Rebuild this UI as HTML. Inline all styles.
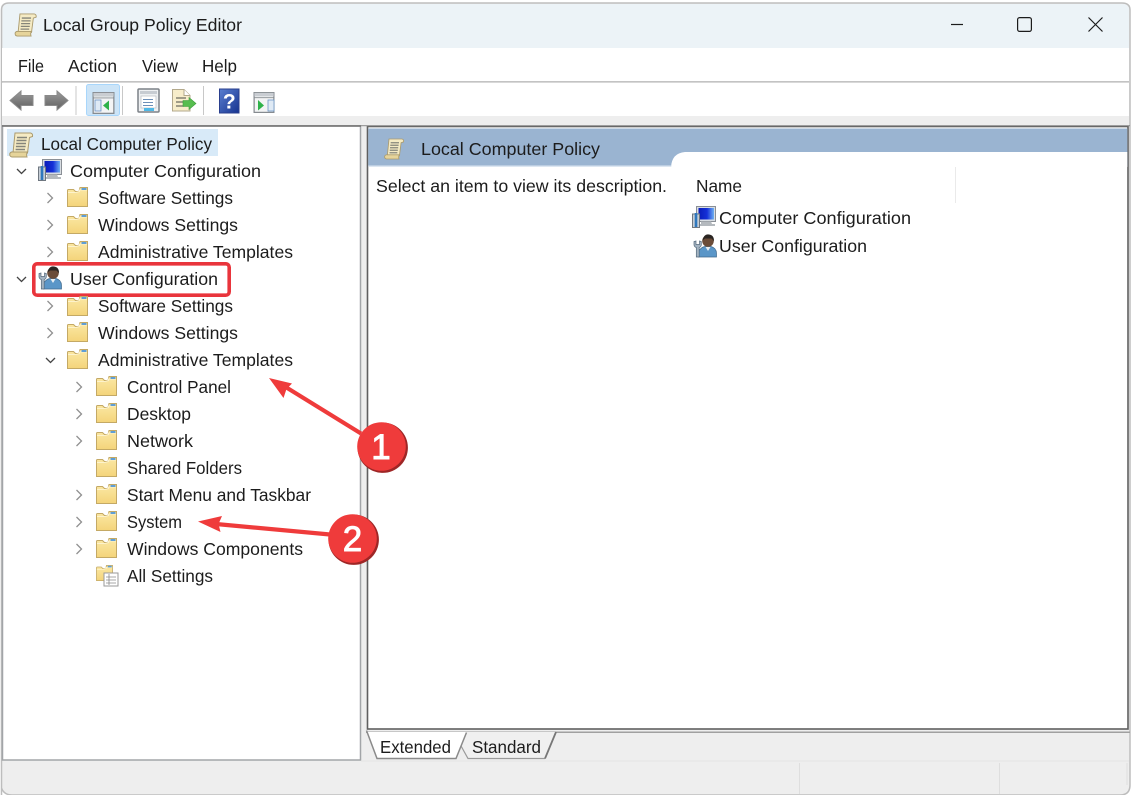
<!DOCTYPE html>
<html lang="en"><head><meta charset="utf-8"><title>Local Group Policy Editor</title>
<style>
html,body{margin:0;padding:0;background:#fff;width:1131px;height:795px;overflow:hidden}
svg{display:block}
text{font-family:"Liberation Sans",sans-serif;font-size:17.5px;fill:#1c1c1c}
</style></head><body>
<svg width="1131" height="795" viewBox="0 0 1131 795" xmlns="http://www.w3.org/2000/svg">
<defs>
<linearGradient id="fg" x1="0" y1="0" x2="0" y2="1"><stop offset="0" stop-color="#fbe9a6"/><stop offset="1" stop-color="#f4d47a"/></linearGradient>
<linearGradient id="ag" x1="0" y1="0" x2="0" y2="1"><stop offset="0" stop-color="#9c9c9c"/><stop offset="1" stop-color="#5f5f5f"/></linearGradient>
<linearGradient id="hg" x1="0" y1="0" x2="1" y2="1"><stop offset="0" stop-color="#5a7fd0"/><stop offset="1" stop-color="#16338f"/></linearGradient>
<linearGradient id="sg" x1="0" y1="0" x2="1" y2="0"><stop offset="0" stop-color="#0a1cb8"/><stop offset=".55" stop-color="#1530d8"/><stop offset="1" stop-color="#6fb0f2"/></linearGradient>
<symbol id="folder" viewBox="0 0 21 20" width="21" height="20" overflow="visible">
<path d="M.5 19.500V3.500Q.5 2.500 1.500 2.500H6.500L8.500 4.500H12L13 .5H20.500V19.500Z" fill="url(#fg)" stroke="#c4a965"/>
<path d="M1 5.500H9L12.500 4.500V3H20" fill="none" stroke="#fdf3cc"/>
<rect x="14.500" y="1" width="5" height="2" fill="#5f9ed6"/>
</symbol>
<symbol id="scroll" viewBox="0 0 24 26" width="24" height="26" overflow="visible">
<path d="M6 1H21.500Q24 1.500 23.500 4.500L20.500 5.500L18.500 21H4Z" fill="#f5ebc4" stroke="#ab9b6e"/>
<path d="M.8 21.500Q2 19.500 4 20H18.500Q17 22 18 25H3Q.3 24.500 .8 21.500Z" fill="#e6d49a" stroke="#ab9b6e"/>
<path d="M8 5.500H18M7.500 8.500H17.500M7.200 11.500H17M6.900 14.500H16.600M6.600 17.500H16" stroke="#85857a" stroke-width="1.400"/>
</symbol>
<symbol id="comp" viewBox="0 0 24 22" width="24" height="22" overflow="visible">
<rect x="4.500" y=".5" width="19" height="15" fill="#d8dde2" stroke="#8a8f96"/>
<rect x="6.500" y="2" width="15.500" height="11.500" fill="url(#sg)"/>
<path d="M9 15.500h10l1 2.500h3v2H7v-2h2z" fill="#b4b9be"/>
<rect x=".5" y="8" width="7" height="13.500" fill="#c6cdd5" stroke="#6f7780"/>
<rect x="2.700" y="7" width="2.600" height="14" fill="#2f78bd"/>
</symbol>
<symbol id="user" viewBox="0 0 24 24" width="24" height="24" overflow="visible">
<path d="M5.500 23V17.500Q8 13 12 12.500H18Q23.500 14 23.500 19.500V23Z" fill="#5a96c8" stroke="#40698c" stroke-width=".7"/>
<path d="M12.500 13l2.500 4 2.500-4z" fill="#e8eef3"/>
<circle cx="15" cy="7" r="5.800" fill="#6b4c38"/>
<path d="M9.500 6.500Q11 -.5 16 .5Q21 1 21 7L18.500 4.500H12Z" fill="#2a2522"/>
<path d="M1 7.500V11Q1.500 13 3.300 13.500V23H6.200V13.500Q8 13 8.300 11V7.500L6.500 7V10.500H3V7Z" fill="#a3b3c1" stroke="#566a7c" stroke-width=".7"/>
</symbol>
<symbol id="pane" viewBox="0 0 24 24" width="24" height="24" overflow="visible">
<rect x=".7" y=".7" width="22.600" height="22.600" fill="#f3f4f5" stroke="#868b90" stroke-width="1.400"/>
<rect x="1" y="1" width="22" height="4" fill="#c9cdd2"/>
<path d="M1 6.500H23" stroke="#868b90"/>
</symbol>
</defs>

<!-- window -->
<rect x="0" y="0" width="1131" height="795" fill="#fff"/>
<path d="M1.500 795V10Q1.500 3 9 3H1122Q1130 3 1130 10V785Q1130 795 1120 795H12Q4 795 1.500 788" fill="#eee" stroke="#bdbdbd" stroke-width="1.500"/>
<path d="M2.500 48V10Q2.500 4 9 4H1122Q1129 4 1129 10V48Z" fill="#ecf3f7"/>
<rect x="2" y="48" width="1127" height="33" fill="#fff"/>
<rect x="2" y="81" width="1127" height="1.500" fill="#c3c3c3"/>
<rect x="2" y="83" width="1127" height="33" fill="#fff"/>
<rect x="2" y="116" width="1127" height="9" fill="#eee"/>

<!-- title -->
<use href="#scroll" x="14" y="13" width="23" height="24"/>
<text x="43" y="31" textLength="199" lengthAdjust="spacingAndGlyphs">Local Group Policy Editor</text>
<path d="M951 24.500H963" stroke="#1c1c1c" stroke-width="1.200"/>
<rect x="1017.600" y="17.600" width="13.800" height="13.800" rx="2" fill="none" stroke="#1c1c1c" stroke-width="1.200"/>
<path d="M1088.500 17.500L1102.500 31.500M1102.500 17.500L1088.500 31.500" stroke="#1c1c1c" stroke-width="1.200"/>

<!-- menu -->
<text x="18" y="72" textLength="26" lengthAdjust="spacingAndGlyphs">File</text>
<text x="68" y="72" textLength="49" lengthAdjust="spacingAndGlyphs">Action</text>
<text x="142" y="72" textLength="36" lengthAdjust="spacingAndGlyphs">View</text>
<text x="202" y="72" textLength="35" lengthAdjust="spacingAndGlyphs">Help</text>

<!-- toolbar -->
<path d="M10 100.500L21 91V95.500H33V105.500H21V110Z" fill="url(#ag)" stroke="#8a8a8a"/>
<path d="M68 100.500L57 91V95.500H45V105.500H57V110Z" fill="url(#ag)" stroke="#8a8a8a"/>
<path d="M76 86V115M122.500 86V115M203.500 86V115" stroke="#c8c8c8" stroke-width="1"/>
<rect x="86.500" y="84.500" width="33" height="31" rx="2" fill="#cce4f7" stroke="#a8d6fb"/>
<use href="#pane" x="92" y="92" width="23" height="22"/>
<rect x="95" y="100" width="6" height="11" fill="#dfeaf5" stroke="#6d96c5" stroke-width=".8"/>
<path d="M109 100.500V110.500L103 105.500Z" fill="#2fb24a"/>
<!-- properties -->
<rect x="138" y="89" width="21" height="23" rx="1" fill="#eef0f2" stroke="#7c8187" stroke-width="1.500"/>
<rect x="140" y="91" width="17" height="3" fill="#c7ccd2"/>
<rect x="141" y="96" width="15" height="12" fill="#fff" stroke="#b9bdc2" stroke-width=".7"/>
<path d="M143 99.500H153M143 102.500H153M143 105.500H153" stroke="#6d8fb8"/>
<rect x="144" y="108" width="10" height="3" fill="#4fb8e6"/>
<!-- export -->
<path d="M172.500 89.500H184L190 95.500V111H172.500Z" fill="#f7edca" stroke="#b3a98c"/>
<path d="M184 89.500V95.500H190" fill="#fff" stroke="#b3a98c"/>
<path d="M176 98H186M176 102H184M176 106H184" stroke="#6c6c60" stroke-width="1.300"/>
<path d="M196 103.500L189 97.500V100.500H183V106.500H189V109.500Z" fill="#57bd4f" stroke="#3d9c3d" stroke-width=".6"/>
<!-- help -->
<rect x="219.500" y="89" width="19.500" height="24" fill="url(#hg)" stroke="#2a3f8e"/>
<text x="229.300" y="108.500" text-anchor="middle" style="font-size:21px;font-weight:bold;fill:#fff">?</text>
<!-- panel -->
<use href="#pane" x="252" y="92" width="24" height="21"/>
<rect x="268" y="100" width="6" height="11" fill="#dfeaf5" stroke="#6d96c5" stroke-width=".8"/>
<path d="M258 100V110.500L264 105.500Z" fill="#2fb24a"/>

<!-- left pane -->
<rect x="2.500" y="126" width="358" height="634" fill="#fff" stroke="#a2a5a8" stroke-width="1.500"/>
<rect x="2" y="125.200" width="359" height="1.500" fill="#6e6e6e"/>
<rect x="7" y="129" width="211" height="27" fill="#d8eaf8"/>

<!-- right pane -->
<rect x="367.500" y="126.500" width="760.500" height="602.500" fill="#fff" stroke="#5f5f5f" stroke-width="1.600"/>
<rect x="361" y="125.200" width="769" height="1" fill="#8a8a8a"/>
<rect x="368.300" y="128.500" width="759" height="37.500" fill="#9ab4d1"/>
<path d="M671 167Q672 153 685 152H1127.300V167Z" fill="#fff"/>
<rect x="368.300" y="165.500" width="303" height="1.500" fill="#dce6f1"/>
<rect x="955" y="167" width="1" height="36" fill="#eaeaea"/>
<use href="#scroll" x="384" y="137" width="20" height="24"/>
<text x="421" y="155" textLength="179" lengthAdjust="spacingAndGlyphs">Local Computer Policy</text>
<text x="376" y="192" textLength="291" lengthAdjust="spacingAndGlyphs">Select an item to view its description.</text>
<text x="696" y="192" textLength="46" lengthAdjust="spacingAndGlyphs">Name</text>
<use href="#comp" x="692" y="206"/>
<text x="719" y="224" textLength="192" lengthAdjust="spacingAndGlyphs">Computer Configuration</text>
<use href="#user" x="693" y="234"/>
<text x="719" y="252" textLength="148" lengthAdjust="spacingAndGlyphs">User Configuration</text>

<!-- tabs -->
<rect x="366" y="731.500" width="764" height="1.500" fill="#a0a0a0"/>
<path d="M466 732L460 745L468 758.500H545L556 732Z" fill="#f0f0f0"/>
<path d="M466 733L460.500 745L468 758.500H545" fill="none" stroke="#9a9a9a" stroke-width="1.200"/>
<path d="M545 758.500L556 732" fill="none" stroke="#777" stroke-width="1.800"/>
<path d="M366 730L377 758.500H456L467 732H366Z" fill="#fff"/>
<path d="M366.500 730.500L377 758.500H456L466.500 732.500" fill="none" stroke="#8a8a8a" stroke-width="1.500"/>
<text x="380" y="753" textLength="71" lengthAdjust="spacingAndGlyphs">Extended</text>
<text x="472" y="753" textLength="69" lengthAdjust="spacingAndGlyphs">Standard</text>

<!-- status -->
<rect x="361" y="760.500" width="768" height="1" fill="#e4e4e4"/>
<path d="M799.500 763V794M999.500 763V794M1127 763V785" stroke="#dedede" stroke-width="1"/>

<!-- tree chevrons -->
<g fill="none" stroke="#444" stroke-width="1.300">
<path d="M17 169L21.500 173.500L26 169M17 277L21.500 281.500L26 277M46 358L50.500 362.500L55 358"/>
</g>
<g fill="none" stroke="#909090" stroke-width="1.300">
<path d="M47.500 193L52.500 198L47.500 203M47.500 220L52.500 225L47.500 230M47.500 247L52.500 252L47.500 257M47.500 301L52.500 306L47.500 311M47.500 328L52.500 333L47.500 338"/>
<path d="M76.500 382L81.500 387L76.500 392M76.500 409L81.500 414L76.500 419M76.500 436L81.500 441L76.500 446M76.500 490L81.500 495L76.500 500M76.500 517L81.500 522L76.500 527M76.500 544L81.500 549L76.500 554"/>
</g>

<!-- tree -->
<use href="#scroll" x="9" y="132"/>
<text x="41" y="150" textLength="171" lengthAdjust="spacingAndGlyphs">Local Computer Policy</text>
<use href="#comp" x="38" y="159"/>
<text x="70" y="177" textLength="191" lengthAdjust="spacingAndGlyphs">Computer Configuration</text>
<use href="#folder" x="67" y="187"/><text x="98" y="204" textLength="135" lengthAdjust="spacingAndGlyphs">Software Settings</text>
<use href="#folder" x="67" y="214"/><text x="98" y="231" textLength="140" lengthAdjust="spacingAndGlyphs">Windows Settings</text>
<use href="#folder" x="67" y="241"/><text x="98" y="258" textLength="195" lengthAdjust="spacingAndGlyphs">Administrative Templates</text>

<rect x="33.800" y="263.800" width="195.400" height="31.400" rx="3.500" fill="#fff" stroke="#e9353c" stroke-width="3.600"/>
<use href="#user" x="38" y="266"/>
<text x="70" y="285" textLength="148" lengthAdjust="spacingAndGlyphs">User Configuration</text>

<use href="#folder" x="67" y="296"/><text x="98" y="312" textLength="135" lengthAdjust="spacingAndGlyphs">Software Settings</text>
<use href="#folder" x="67" y="322"/><text x="98" y="339" textLength="140" lengthAdjust="spacingAndGlyphs">Windows Settings</text>
<use href="#folder" x="67" y="349"/><text x="98" y="366" textLength="195" lengthAdjust="spacingAndGlyphs">Administrative Templates</text>
<use href="#folder" x="96" y="376"/><text x="127" y="393" textLength="104" lengthAdjust="spacingAndGlyphs">Control Panel</text>
<use href="#folder" x="96" y="403"/><text x="127" y="420" textLength="64" lengthAdjust="spacingAndGlyphs">Desktop</text>
<use href="#folder" x="96" y="430"/><text x="127" y="447" textLength="66" lengthAdjust="spacingAndGlyphs">Network</text>
<use href="#folder" x="96" y="457"/><text x="127" y="474" textLength="115" lengthAdjust="spacingAndGlyphs">Shared Folders</text>
<use href="#folder" x="96" y="484"/><text x="127" y="501" textLength="184" lengthAdjust="spacingAndGlyphs">Start Menu and Taskbar</text>
<use href="#folder" x="96" y="511"/><text x="127" y="528" textLength="55" lengthAdjust="spacingAndGlyphs">System</text>
<use href="#folder" x="96" y="538"/><text x="127" y="555" textLength="176" lengthAdjust="spacingAndGlyphs">Windows Components</text>
<use href="#folder" x="96" y="565" width="17" height="16"/>
<rect x="104" y="573" width="14" height="13" fill="#fff" stroke="#9a9a9a"/>
<path d="M106 577H116M106 580H116M106 583H116M109 574V585" stroke="#8a8a8a" stroke-width=".8"/>
<text x="127" y="582" textLength="86" lengthAdjust="spacingAndGlyphs">All Settings</text>

<!-- annotations -->
<path d="M361 433.500L284 386" stroke="#ef3b3b" stroke-width="4.200"/>
<path d="M269 378L292 383.500L286.500 389L283.500 398L269 378Z" fill="#ef3b3b"/>
<path d="M330 534.500L216 524" stroke="#ef3b3b" stroke-width="4.200"/>
<path d="M198 521.500L222 516L218.500 524L220.500 532Z" fill="#ef3b3b"/>
<circle cx="382.700" cy="447.700" r="25.200" fill="#9e2626"/>
<circle cx="381.500" cy="446.500" r="24.300" fill="#ef3b3b"/>
<text x="381" y="459" text-anchor="middle" style="font-size:35px;fill:#fff;stroke:#fff;stroke-width:.9">1</text>
<circle cx="353.700" cy="539.700" r="25.200" fill="#9e2626"/>
<circle cx="352.500" cy="538.500" r="24.300" fill="#ef3b3b"/>
<text x="352.500" y="551" text-anchor="middle" style="font-size:35px;fill:#fff;stroke:#fff;stroke-width:.9">2</text>
</svg>
</body></html>
